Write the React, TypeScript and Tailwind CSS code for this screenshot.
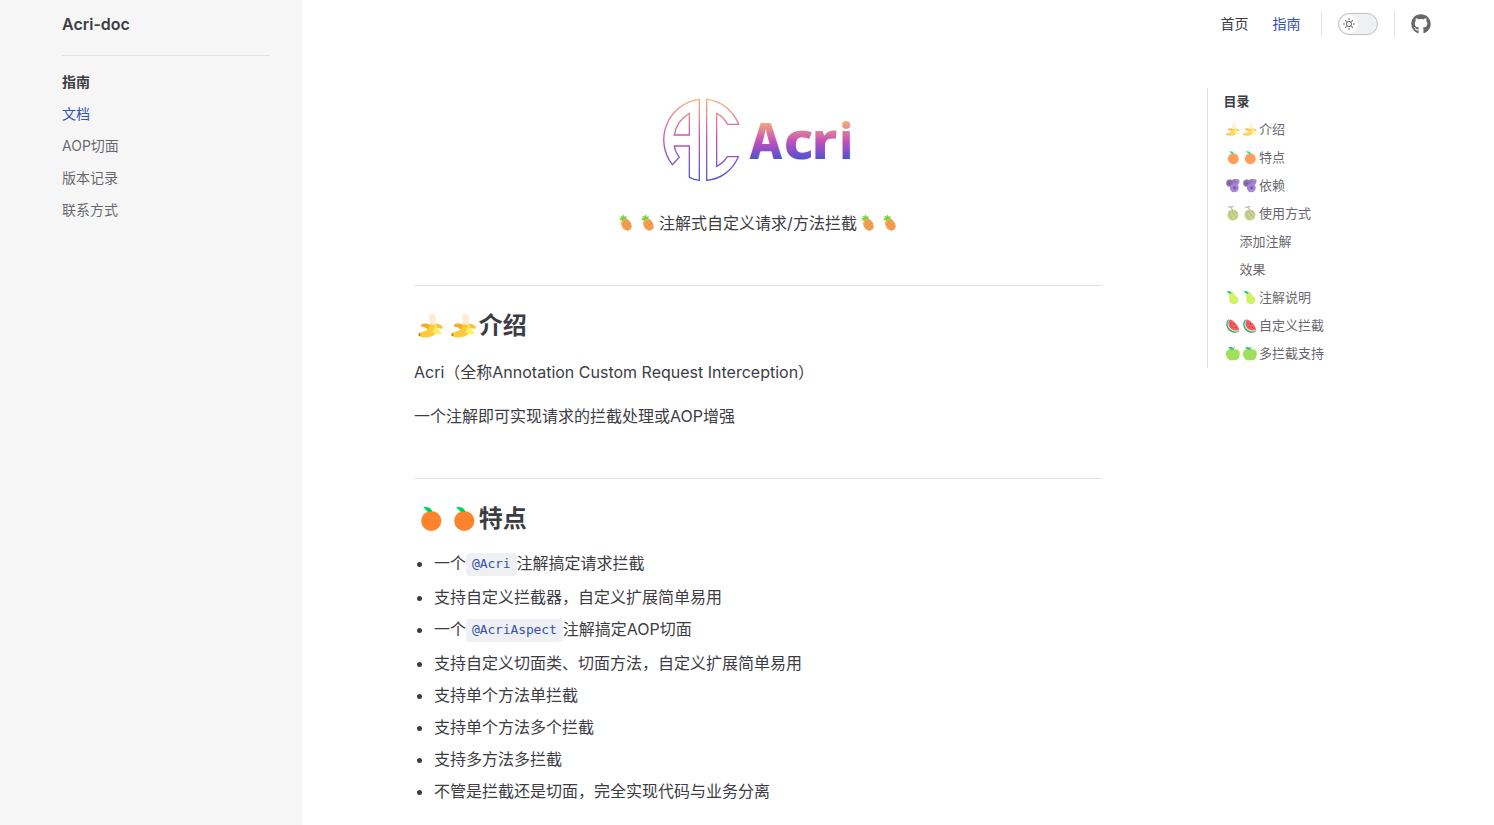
import React from 'react';
import { FaGithub } from 'react-icons/fa';

type FruitName = 'banana' | 'orange' | 'berries' | 'melon' | 'pear' | 'watermelon' | 'apple' | 'pineapple';

const shapes: Record<FruitName, React.ReactNode> = {
  banana: (
    <>
      <path d="M14.6 6.5C15 4.5 17 3.8 18.6 4c1.8.2 2.7 1.300 2.600 3L21.500 16l-5 2z" fill="#FFECD0" />
      <path d="M16 14.500C12 12.500 8.500 12.800 6.800 14.500c-.5 1 .2 1.800 1.200 1.800 2 .1 3.500.9 4.500 2.200L17 19z" fill="#F3AD2B" />
      <path d="M20.500 13.500c3.500-.5 6.500 1 7.500 3.400.3 1-.5 1.600-1.300 1.400l-4-.8z" fill="#F9C23C" />
      <path d="M16.300 13c-1 5.500-5 8-11.300 9.200-.8.600-.9 2.300 0 3 5.500 2.800 13.500 1.700 17.300-3.200L22 13c-1.500 2-4 2-5.700 0z" fill="#FCCB35" />
      <path d="M21 12.500c.5 3.500 3 6.500 5.600 10 .3.800-.3 1.500-1 1.300-3-.1-6-.8-7.600-2.500 1.600-2.300 2.500-5 3-8.800z" fill="#FFF063" />
      <path d="M4.800 22.800c-.8.8-.7 2 .2 2.500l1.300-.2-.5-2.500z" fill="#B07F45" />
    </>
  ),
  orange: (
    <>
      <circle cx="16.800" cy="17.500" r="9.800" fill="#FF822D" />
      <path d="M9 4.200c4-.8 8 .3 8.800 4.300-1.500.5-2.700.4-3.800.200-2.500-.6-2.800-3-5-4.500z" fill="#00D26A" />
    </>
  ),
  berries: (
    <>
      <path d="M16 5.500C19 3.500 24 3.800 27.500 4.500c.7 4 .2 7-2.500 10l-8-2z" fill="#8D65C5" />
      <circle cx="10.500" cy="11" r="6.600" fill="#6D4590" />
      <circle cx="18.500" cy="7.500" r="4" fill="#7B4DB0" />
      <circle cx="18.500" cy="19.500" r="8" fill="#8B62D0" />
      <circle cx="9.500" cy="11.500" r="2.200" fill="#533566" />
      <circle cx="19" cy="19.500" r="2.400" fill="#4A2C66" />
    </>
  ),
  melon: (
    <>
      <path d="M7.500 4l9-1M12.500 4l3.500 6" stroke="#A56953" strokeWidth="1.500" fill="none" />
      <circle cx="16" cy="18" r="10" fill="#B9CB72" />
      <path d="M11 11c-2 5 .5 11 5.500 15.500M14.500 10c1 5.500 5 10 8.500 12.500M19 10c1.500 2 3.500 5 5.500 7" stroke="#84924A" strokeWidth="1.200" fill="none" />
    </>
  ),
  pear: (
    <>
      <path d="M9 9c1-4.500 7.500-5 9.500-.5 1 2.700 2.300 3.500 4.500 5.500 4 3.800 3.800 9 .5 11.500-3.500 2.800-10 2.300-12.700-1.500-2.500-3.500-1-6.500-1.400-9.500-.2-2-.8-3.500-.4-5.500z" fill="#C3EF3C" />
      <path d="M4.500 4.500c3-2 7-1 9 1.500l-1.500 3C9 9 8 7 4.500 4.500z" fill="#00B96A" />
    </>
  ),
  watermelon: (
    <>
      <path d="M8 4C2 9 3.500 20 9.500 24.500c5.500 4.300 13.500 5 18.500.8l-3-4L10.500 7z" fill="#008463" />
      <path d="M9.500 5C4.500 10.500 6 18.500 11.500 23c5 3.700 11 4 15.500 1.500z" fill="#D3F0C0" />
      <path d="M11 4C6.500 9.500 7.500 17 12.500 21c4.500 3.500 10.500 4 15 1.700C25 14.500 19 7.500 11 4z" fill="#F8312F" />
      <path d="M12 11l.6 1.200M17 12l.6 1.200M14 17l.8 1M20 18.500l.8 1" stroke="#321B41" strokeWidth="1.700" strokeLinecap="round" />
    </>
  ),
  apple: (
    <>
      <path d="M16 8.500c4-2 10.500-1.500 12 4 1.300 5-.7 11-4 14-2.400 1.300-5 .7-7.500.7s-5.100.6-7.500-.7C5.500 24 2.500 18 3.800 13 5.300 7.500 12 6.500 16 8.500z" fill="#86D72F" />
      <path d="M7.500 4.500c4.500-2.500 9-1 10.500 3.500-4.500 2-8.500.5-10.500-3.500z" fill="#00B96A" />
      <path d="M17 9c0-2 .5-4 2-5.500" stroke="#44911B" strokeWidth="1.500" fill="none" />
    </>
  ),
  pineapple: (
    <>
      <path d="M6 9.500l3.500-1L7 6l3.800.6L12 3.800l2.300 3 2.700-.8-.5 3.500L19 11.500 12 15l-2-3-3.800.300 1.800-1.800z" fill="#6FD83A" />
      <path d="M9.500 13.500c2-4.200 8-5 11-1.200 3.800 4.200 5.500 10 2.300 13.400-3.500 3.400-9.800 1-12.100-3-1.500-2.600-2.300-6.200-1.200-9.200z" fill="#F5A355" />
      <path d="M12.500 13l9 9M11.500 17.500l7.500 7.500M17.500 12l5.500 6.500M19.500 12l-8 6M22.500 16l-9 6.500M23 20.500l-6 5" stroke="#D9853F" strokeWidth=".7" fill="none" />
    </>
  ),
};

function Fruits({ name }: { name: FruitName }) {
  return (
    <span className="inline-flex shrink-0 items-center">
      <svg viewBox="0 0 32 32" className="size-[1.37em]">{shapes[name]}</svg>
      <svg viewBox="0 0 32 32" className="size-[1.37em]">{shapes[name]}</svg>
    </span>
  );
}

function Logo() {
  return (
    <svg width="206" height="100" viewBox="0 0 206 100" className="block">
      <defs>
        <linearGradient id="ring" gradientUnits="userSpaceOnUse" x1="0" y1="27" x2="0" y2="273">
          <stop offset="0" stopColor="#FBB27A" />
          <stop offset=".45" stopColor="#C957AE" />
          <stop offset="1" stopColor="#5454D6" />
        </linearGradient>
        <linearGradient id="word" gradientUnits="userSpaceOnUse" x1="0" y1="-38" x2="0" y2="1">
          <stop offset="0" stopColor="#FBB072" />
          <stop offset=".55" stopColor="#C04EBD" />
          <stop offset="1" stopColor="#4B53D0" />
        </linearGradient>
      </defs>
      <g transform="scale(.33333)" fill="none" stroke="url(#ring)" strokeWidth="4">
        <path d="M133 28A122 122 0 0 0 52 224L73 202C65 192 60 181 58 168H103V262Q118 269 133 271Z" />
        <path d="M103 70V135H58C62 108 79 84 103 70Z" />
        <path d="M155 28V271C198 268 233 240 250 200H217C209 213 199 222 185 229V70C199 77 210 88 218 103H251C235 62 198 32 155 28Z" />
      </g>
      <g fill="url(#word)" className="font-['Noto_Sans'] text-[49px] font-extrabold">
        <text transform="translate(94.5 68.500) scale(.94 1)">A</text>
        <text transform="translate(128.500 68.500) scale(1.16 1)">c</text>
        <text transform="translate(156.500 68.500) scale(1.15 1)">r</text>
        <text transform="translate(184.500 68.500) scale(.88 1)">i</text>
      </g>
    </svg>
  );
}

const sidebar = ['AOP切面', '版本记录', '联系方式'];

const outline: { text: string; fruit?: FruitName }[] = [
  { text: '介绍', fruit: 'banana' },
  { text: '特点', fruit: 'orange' },
  { text: '依赖', fruit: 'berries' },
  { text: '使用方式', fruit: 'melon' },
  { text: '添加注解' },
  { text: '效果' },
  { text: '注解说明', fruit: 'pear' },
  { text: '自定义拦截', fruit: 'watermelon' },
  { text: '多拦截支持', fruit: 'apple' },
];

function Code({ children }: { children: string }) {
  return (
    <code className="mt-[2px] flex h-[23px] items-center rounded bg-[#eff0f3] px-[6px] font-['DejaVu_Sans_Mono',monospace] text-[13px] tracking-[-0.13px] text-[#3451b2]">
      {children}
    </code>
  );
}

const features: { before: string; code?: string; after?: string; size: string }[] = [
  { before: '一个', code: '@Acri', after: '注解搞定请求拦截', size: 'h-[34px] mb-px' },
  { before: '支持自定义拦截器，自定义扩展简单易用', size: 'h-8' },
  { before: '一个', code: '@AcriAspect', after: '注解搞定AOP切面', size: 'h-8 mb-[2px]' },
  { before: '支持自定义切面类、切面方法，自定义扩展简单易用', size: 'h-8' },
  { before: '支持单个方法单拦截', size: 'h-8' },
  { before: '支持单个方法多个拦截', size: 'h-8' },
  { before: '支持多方法多拦截', size: 'h-8' },
  { before: '不管是拦截还是切面，完全实现代码与业务分离', size: 'h-8' },
];

function Heading({ fruit, children }: { fruit: FruitName; children: string }) {
  return (
    <h2 className="mt-6 flex h-8 items-center text-2xl leading-8 font-semibold">
      <Fruits name={fruit} />
      <span className="-ml-px">{children}</span>
    </h2>
  );
}

export default function App() {
  return (
    <div className="flex h-[825px] overflow-hidden bg-white font-['Inter','Noto_Sans_CJK_SC',sans-serif] text-[#3c3c43]">
      <aside className="w-[302px] shrink-0 bg-[#f6f6f7] pr-8 pl-[62px]">
        <div className="flex h-14 items-center border-b border-[#e2e2e3] pb-[7px] text-base font-semibold">Acri-doc</div>
        <nav className="mt-[10px] text-sm text-[#3c3c43]/78">
          <h3 className="flex h-8 items-center font-bold text-[#3c3c43]">指南</h3>
          <a className="flex h-8 items-center text-[#3451b2]">文档</a>
          {sidebar.map((item) => (
            <a key={item} className="flex h-8 items-center">{item}</a>
          ))}
        </nav>
      </aside>

      <div className="flex min-w-0 grow flex-col">
        <header className="flex h-12 shrink-0 items-center justify-end pr-[63px] text-sm">
          <a>首页</a>
          <a className="ml-6 text-[#3451b2]">指南</a>
          <span className="ml-[20.500px] h-6 w-px bg-[#e2e2e3]" />
          <button className="ml-4 flex h-[22px] w-10 items-center rounded-full border border-[#c2c2c4] bg-[#eff0f3] px-px">
            <span className="flex size-[18px] items-center justify-center rounded-full bg-white">
              <svg viewBox="0 0 24 24" className="size-3 text-[#3c3c43]/78" fill="currentColor">
                <path d="M12 18a6 6 0 1 1 0-12 6 6 0 0 1 0 12Zm0-10a4 4 0 1 0 0 8 4 4 0 0 0 0-8ZM11 0h2v4h-2ZM11 20h2v4h-2ZM0 11h4v2H0ZM20 11h4v2h-4ZM3.500 4.900 4.900 3.500 7.800 6.400 6.400 7.800ZM16.200 17.600l1.400-1.400 2.900 2.900-1.400 1.400ZM3.500 19.100l2.900-2.900 1.400 1.400-2.900 2.900ZM16.200 6.400l2.900-2.900 1.400 1.400-2.900 2.900Z" />
              </svg>
            </span>
          </button>
          <span className="ml-4 h-6 w-px bg-[#e2e2e3]" />
          <FaGithub className="ml-4 size-5 text-[#67676c]" />
        </header>

        <div className="flex pl-28">
          <main className="w-[688px] shrink-0 pt-[42px] text-base">
            <div className="flex justify-center">
              <Logo />
            </div>
            <p className="mt-[19px] flex h-7 items-center justify-center">
              <Fruits name="pineapple" />
              <span>注解式自定义请求/方法拦截</span>
              <Fruits name="pineapple" />
            </p>

            <section className="mt-12 border-t border-[#e2e2e3]">
              <Heading fruit="banana">介绍</Heading>
              <p className="mt-4 leading-7">Acri（全称Annotation Custom Request Interception）</p>
              <p className="mt-4 leading-7">一个注解即可实现请求的拦截处理或AOP增强</p>
            </section>

            <section className="mt-12 border-t border-[#e2e2e3]">
              <Heading fruit="orange">特点</Heading>
              <ul className="mt-[11px]">
                {features.map((f) => (
                  <li key={f.before + (f.code ?? '')} className={`flex items-center pl-[3px] whitespace-nowrap ${f.size}`}>
                    <span className="mt-[2px] mr-3 size-[5px] rounded-full bg-[#3c3c43]" />
                    <span>{f.before}</span>
                    {f.code && <Code>{f.code}</Code>}
                    {f.after && <span>{f.after}</span>}
                  </li>
                ))}
              </ul>
            </section>
          </main>

          <aside className="mt-10 ml-[105px] h-[280px] w-56 border-l border-[#e2e2e3] pl-[15.5px] text-[13px]">
            <div className="flex h-7 items-center font-semibold">目录</div>
            {outline.map((item) => (
              <a key={item.text} className={item.fruit ? 'flex h-7 items-center opacity-78' : 'flex h-7 items-center pl-4 opacity-78'}>
                {item.fruit && <Fruits name={item.fruit} />}
                {item.text}
              </a>
            ))}
          </aside>
        </div>
      </div>
    </div>
  );
}
